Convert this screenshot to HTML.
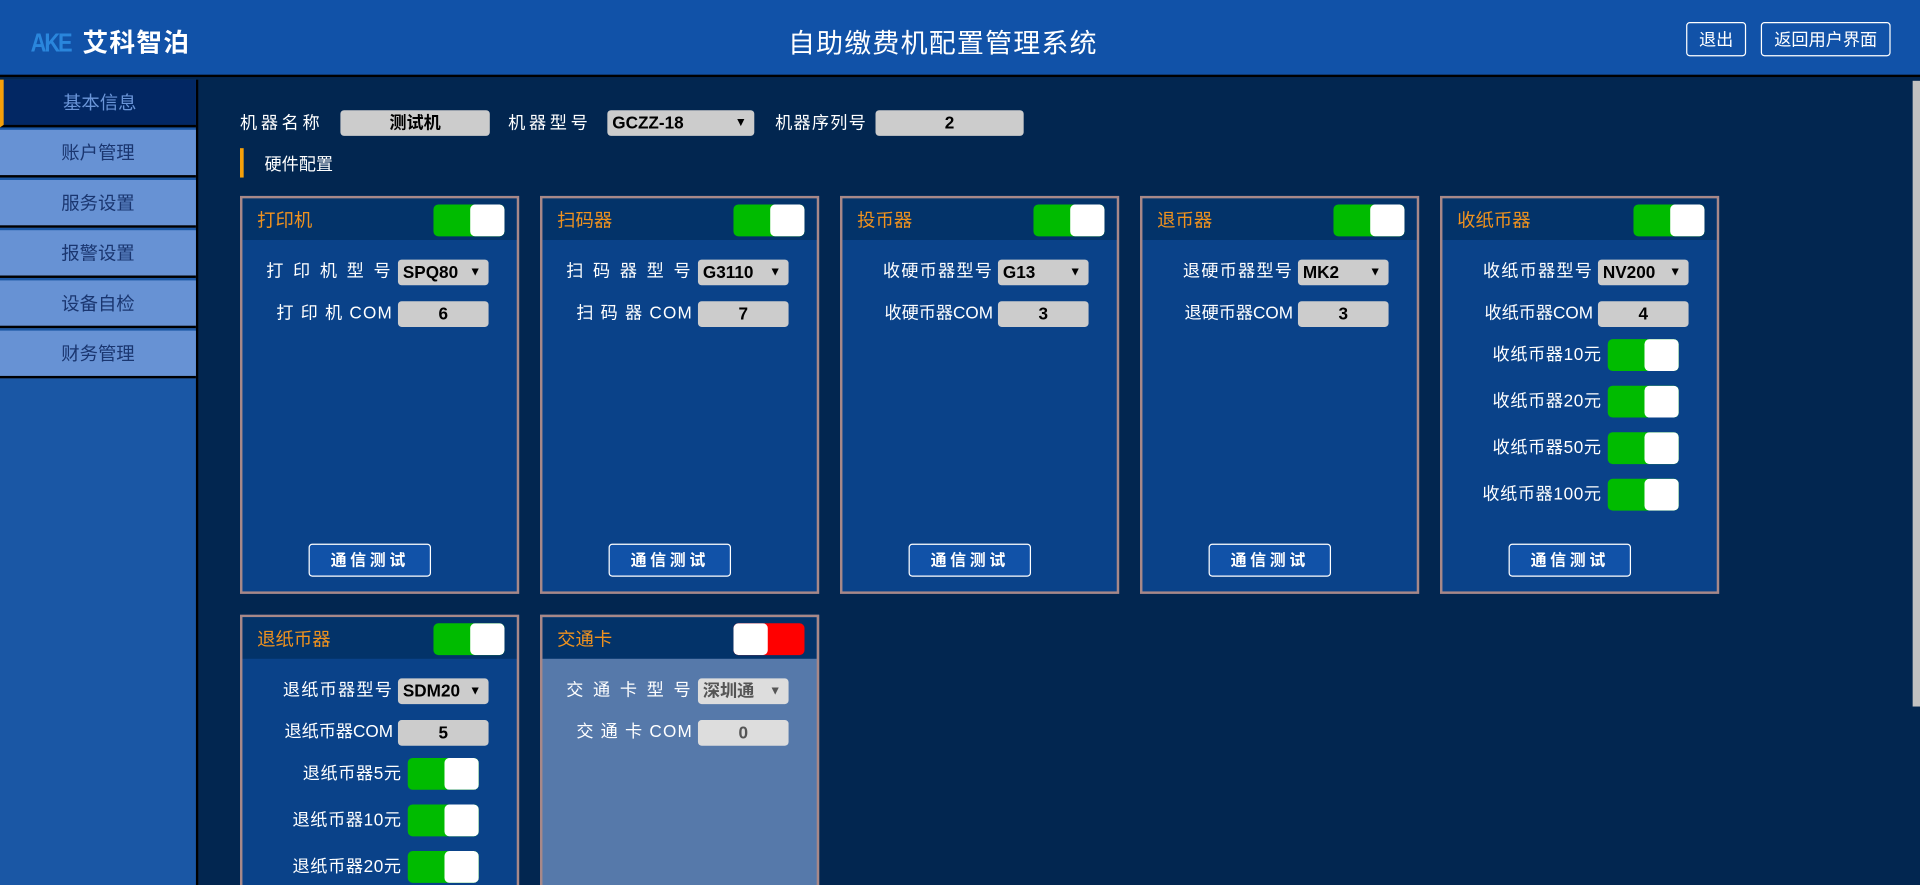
<!DOCTYPE html>
<html><head><meta charset="utf-8"><style>
*{margin:0;padding:0;box-sizing:border-box}
html,body{width:1920px;height:885px;overflow:hidden;background:#022650;font-family:"Liberation Sans","Noto Sans CJK SC",sans-serif}
#w{position:absolute;left:0;top:0;width:1568px;height:723px;transform:scale(1.22449);transform-origin:0 0;background:#022650;overflow:hidden}
.a{position:absolute}
#hd{left:0;top:0;width:1568px;height:63px;background:#1152a8;border-bottom:2px solid #000}
.logo{left:25px;top:19px;font-size:21px;font-weight:bold;color:#fff;letter-spacing:1px}
.logo i{color:#2a86dc;font-style:normal;letter-spacing:-2px;margin-right:4px;display:inline-block;transform:scaleX(0.85);transform-origin:0 0}
.title{left:0;width:1540px;top:18px;text-align:center;font-size:22px;color:#fff;letter-spacing:1px}
.hb{top:18px;height:28px;border:1px solid #fff;border-radius:3px;color:#fff;font-size:14px;line-height:26px;text-align:center}
#sb{left:0;top:65px;width:162px;height:660px;background:#1a57a5;border-right:2px solid #000}
.mi{position:absolute;left:0;width:160px;height:39px;background:#6792d4;color:#1a3670;font-size:15px;text-align:center;line-height:39px;border-bottom:2px solid #000}
.mi.on{background:#022763;color:#6a95d8;border-left:3px solid #f5a00a}
.lb{font-size:14px;color:#fff;letter-spacing:3px}
.in{background:#ccc;border-radius:3px;height:21px;line-height:21px;font-size:14px;font-weight:bold;color:#000;text-align:center}
.sel{text-align:left;padding-left:4px}
.sel:after{content:"▼";position:absolute;right:6px;font-size:10px}
.card{position:absolute;width:228px;border:2px solid #a88888;background:#0a4289;overflow:hidden}
.ch{position:absolute;left:0;top:0;width:224px;height:34px;background:#033369}
.ct{position:absolute;left:12px;top:7px;color:#f0921e;font-size:15px}
.tg{position:absolute;width:58px;height:26px;border-radius:4px;background:#00bb00;overflow:hidden}
.tg:after{content:"";position:absolute;right:0;top:0;width:28px;height:26px;background:#fff;border-radius:4px}
.tg.off{background:red}
.tg.off:after{left:0;right:auto}
.row{position:absolute;left:0;width:224px;height:22px}
.row .l{position:absolute;right:101px;top:-1px;font-size:14px;color:#fff;letter-spacing:2px;white-space:nowrap}
.row .in{position:absolute;left:127px;width:74px;top:0}
.trow{position:absolute;left:0;width:224px;height:26px}
.trow .l{position:absolute;right:94px;top:2px;font-size:14px;color:#fff;letter-spacing:0.5px;white-space:nowrap}
.trow .tg{left:135px;top:0}
.btn{position:absolute;left:54px;top:282px;width:100px;height:27px;border:1px solid #fff;border-radius:3px;background:#1152a8;color:#fff;font-size:13px;line-height:25px;text-align:center;letter-spacing:3px;font-weight:bold}
</style></head><body><div id="w">
<div id="hd" class="a"></div>
<div class="a logo"><i>AKE</i>艾科智泊</div>
<div class="a title">自助缴费机配置管理系统</div>
<div class="a hb" style="left:1377px;width:49px">退出</div>
<div class="a hb" style="left:1438px;width:106px">返回用户界面</div>
<div id="sb" class="a">
<div class="mi on" style="top:0">基本信息</div>
<div class="mi" style="top:41px">账户管理</div>
<div class="mi" style="top:82px">服务设置</div>
<div class="mi" style="top:123px">报警设置</div>
<div class="mi" style="top:164px">设备自检</div>
<div class="mi" style="top:205px">财务管理</div>
</div>
<div class="a" style="left:1562px;top:66px;width:6px;height:511px;background:#c1c1c1"></div>
<div class="a lb" style="left:196px;top:90px">机器名称</div>
<div class="a in" style="left:278px;top:90px;width:122px">测试机</div>
<div class="a lb" style="left:415px;top:90px">机器型号</div>
<div class="a in sel" style="left:496px;top:90px;width:120px">GCZZ-18</div>
<div class="a lb" style="left:633px;top:90px;letter-spacing:1px">机器序列号</div>
<div class="a in" style="left:715px;top:90px;width:121px">2</div>
<div class="a" style="left:196px;top:121px;width:3px;height:24px;background:#f5a00a"></div>
<div class="a" style="left:216px;top:124px;color:#fff;font-size:14px">硬件配置</div>

<div class="card" style="left:196px;top:160px;height:325px"><div class="ch"></div><div class="ct">打印机</div><div class="tg" style="left:156px;top:5px"></div>
<div class="row" style="top:50px"><span class="l">打 印 机 型 号</span><div class="in sel">SPQ80</div></div>
<div class="row" style="top:84px"><span class="l" style="letter-spacing:1px">打 印 机 COM</span><div class="in">6</div></div>
<div class="btn">通信测试</div></div>

<div class="card" style="left:441px;top:160px;height:325px"><div class="ch"></div><div class="ct">扫码器</div><div class="tg" style="left:156px;top:5px"></div>
<div class="row" style="top:50px"><span class="l">扫 码 器 型 号</span><div class="in sel">G3110</div></div>
<div class="row" style="top:84px"><span class="l" style="letter-spacing:1px">扫 码 器 COM</span><div class="in">7</div></div>
<div class="btn">通信测试</div></div>

<div class="card" style="left:686px;top:160px;height:325px"><div class="ch"></div><div class="ct">投币器</div><div class="tg" style="left:156px;top:5px"></div>
<div class="row" style="top:50px"><span class="l" style="letter-spacing:1px">收硬币器型号</span><div class="in sel">G13</div></div>
<div class="row" style="top:84px"><span class="l" style="letter-spacing:0">收硬币器COM</span><div class="in">3</div></div>
<div class="btn">通信测试</div></div>

<div class="card" style="left:931px;top:160px;height:325px"><div class="ch"></div><div class="ct">退币器</div><div class="tg" style="left:156px;top:5px"></div>
<div class="row" style="top:50px"><span class="l" style="letter-spacing:1px">退硬币器型号</span><div class="in sel">MK2</div></div>
<div class="row" style="top:84px"><span class="l" style="letter-spacing:0">退硬币器COM</span><div class="in">3</div></div>
<div class="btn">通信测试</div></div>

<div class="card" style="left:1176px;top:160px;height:325px"><div class="ch"></div><div class="ct">收纸币器</div><div class="tg" style="left:156px;top:5px"></div>
<div class="row" style="top:50px"><span class="l" style="letter-spacing:1px">收纸币器型号</span><div class="in sel">NV200</div></div>
<div class="row" style="top:84px"><span class="l" style="letter-spacing:0">收纸币器COM</span><div class="in">4</div></div>
<div class="trow" style="top:115px"><span class="l">收纸币器10元</span><div class="tg"></div></div>
<div class="trow" style="top:153px"><span class="l">收纸币器20元</span><div class="tg"></div></div>
<div class="trow" style="top:191px"><span class="l">收纸币器50元</span><div class="tg"></div></div>
<div class="trow" style="top:229px"><span class="l">收纸币器100元</span><div class="tg"></div></div>
<div class="btn">通信测试</div></div>

<div class="card" style="left:196px;top:502px;height:240px"><div class="ch"></div><div class="ct">退纸币器</div><div class="tg" style="left:156px;top:5px"></div>
<div class="row" style="top:50px"><span class="l" style="letter-spacing:1px">退纸币器型号</span><div class="in sel">SDM20</div></div>
<div class="row" style="top:84px"><span class="l" style="letter-spacing:0">退纸币器COM</span><div class="in">5</div></div>
<div class="trow" style="top:115px"><span class="l">退纸币器5元</span><div class="tg"></div></div>
<div class="trow" style="top:153px"><span class="l">退纸币器10元</span><div class="tg"></div></div>
<div class="trow" style="top:191px"><span class="l">退纸币器20元</span><div class="tg"></div></div>
</div>

<div class="card" style="left:441px;top:502px;height:240px;background:#5679aa"><div class="ch"></div><div class="ct">交通卡</div><div class="tg off" style="left:156px;top:5px"></div>
<div class="row" style="top:50px"><span class="l">交 通 卡 型 号</span><div class="in sel" style="background:#ddd;color:#555">深圳通</div></div>
<div class="row" style="top:84px"><span class="l" style="letter-spacing:1px">交 通 卡 COM</span><div class="in" style="background:#ddd;color:#555">0</div></div>
</div>
</div></body></html>
